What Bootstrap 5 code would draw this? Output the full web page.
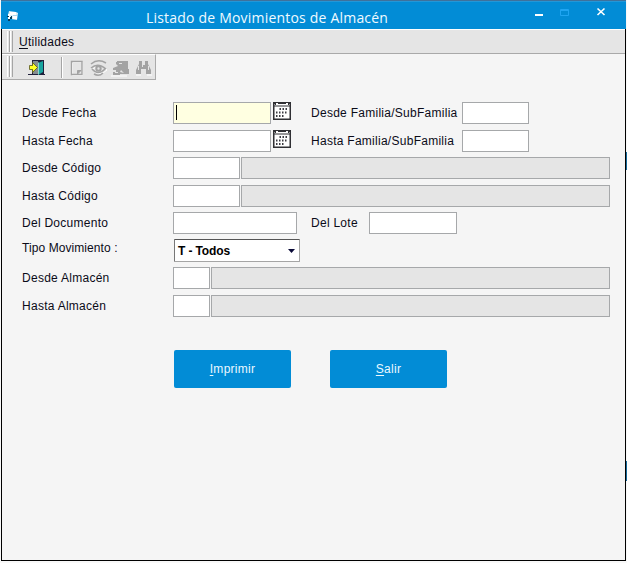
<!DOCTYPE html>
<html lang="es">
<head>
<meta charset="utf-8">
<title>Listado de Movimientos de Almacén</title>
<link href="https://cdn.jsdelivr.net/npm/bootstrap@5.3.0/dist/css/bootstrap.min.css" rel="stylesheet">
<style>
html, body { height: 563px; overflow: hidden; }
body {
  font: 12px/16px "Liberation Sans", Arial, sans-serif; letter-spacing: .27px; color: #0b0b18;
  background: linear-gradient(#14699b, #14699b) 626px 152px / 1px 18px no-repeat, linear-gradient(#14699b, #14699b) 626px 461px / 1px 20px no-repeat, #f8f8f8;
}
.win { width: 625px; height: 561px; margin-left: 1px; border: 1px solid #000; border-top: 0; background: #f5f5f5; }
.titlebar { height: 29px; margin: 0 -1px; padding-left: 6px; background: #028cd6; border-top: 1px solid #3f719b; box-shadow: inset 0 1px #2397d8; }
.caption-text { font: 14px/20px "Open Sans", sans-serif; letter-spacing: .2px; color: #f0faff; margin: 7px 0 0 127px; width: 243px; white-space: nowrap; }
.win-buttons { margin: 3px 0 0 138px; }
.menubar { height: 25px; background: #e5e5e5; border-top: 1px solid #fff; border-bottom: 1px solid #a9a9a9; }
.menubar u, .btn u { text-underline-offset: 2px; text-decoration-thickness: 1px; }
.menu-item { margin: 4px 0 0 6px; }
.toolbar { width: 154px; height: 26px; background: #e5e5e5; border: 1px solid #aaa; border-top-color: #fff; border-left: 0; }
.grip { width: 6px; height: 21px; margin: 1px 0 0 5px; border-right: 1px solid #a5a5a5; background: linear-gradient(90deg, #fff 1px, #e5e5e5 1px 2px, #a5a5a5 2px 3px, #fff 3px 4px, #e5e5e5 4px); }
.form-area { padding: 22px 15px 0 20px; }
.field-row { height: 22px; margin-bottom: 6px; }
.tight { margin-bottom: 5px; }
.lbl { width: 151px; white-space: nowrap; }
.lbl-kind { letter-spacing: .08px; margin-top: 1px; }
.lbl-b { width: 151px; margin-left: 20px; white-space: nowrap; }
.lbl-c { width: 58px; margin-left: 14px; white-space: nowrap; }
.form-control.box { height: 22px; min-height: 0; padding: 0 3px; border: 1px solid #a6a8aa; border-radius: 0; font: inherit; background: #fff; flex: none; }
.form-control.out { background: #e5e5e5; flex: 1 1 0; width: 0; margin-left: 1px; }
.form-control.active-box { background: #ffffe1; padding-left: 2px; }
.caret-bar { width: 1px; height: 15px; background: #000; margin-top: 2px; }
.w98 { width: 98px; } .w67 { width: 67px; } .w124 { width: 124px; } .w88 { width: 88px; } .w37 { width: 37px; }
.cal { margin: -4px 0 0 2px; }
.combo { width: 126px; height: 23px; margin-left: 1px; padding: 0 4px 0 3px; background: #fff; border: 1px solid #a5a5a5; border-top-color: #555; border-left-color: #777; border-radius: 1px; letter-spacing: -.12px; color: #000; }
.btn.cmd { width: 117px; height: 38px; padding: 0; border: 0; border-radius: 2px; background: #028cd6; color: #eaf8ff; font: inherit; letter-spacing: .27px; }
.actions { margin: 33px 0 0 152px; gap: 39px; }
svg { display: block; flex: none; }
</style>
<script src="https://cdn.jsdelivr.net/npm/bootstrap@5.3.0/dist/js/bootstrap.bundle.min.js"></script>
</head>
<body>
<svg width="0" height="0" class="position-absolute">
  <symbol id="calendar" viewBox="0 0 18 18">
    <path fill="#fff" d="M0 0h18v18H0z"/>
    <path fill="none" stroke="#303034" stroke-width="1.500" d="M.75 .75h16.500v16.500H.75z"/>
    <path fill="#303034" d="M0 0h18v2H0zM1 3.500h16v1H1zM2 2h1v1H2zM15 2h1v1h-1z"/>
    <path fill="#fff" d="M3 1h2v1H3zM13 1h2v1h-2z"/>
    <path stroke="#3c3c42" stroke-width="2" stroke-dasharray="1.500 1.500" d="M6.500 7H15M3 10.500h12M3 14h9" fill="none"/>
  </symbol>
</svg>
<main class="win">
  <header class="titlebar d-flex">
    <svg width="12" height="14" class="mt-2" viewBox="0 0 12 14">
      <path fill="#d9eef8" d="M2 2l7 1 2 1-1 7-6-1-3-4z"/><path fill="#fff" d="M3 3h6v3H3zM6 7h4v3H6zM1 5h2v3H1z"/>
      <path fill="#083d59" d="M0 7h2v1H0zM4 7h1v3H3v2H1v-2h2V8h1z"/><path fill="#fff" d="M1 8h2v2H1z"/><path fill="#a8d8ee" d="M6 6h4v1H6z"/>
    </svg>
    <div class="caption-text">Listado de Movimientos de Almacén</div>
    <svg class="win-buttons" width="90" height="18" viewBox="0 0 90 18">
      <path d="M8 10h8v2H8z" fill="#fff"/>
      <path d="M33.500 5.500h8v6h-8zM33 6.500h9" fill="none" stroke="#20a5f2"/>
      <path d="M70.500 4.500l7 6.500M77.500 4.500l-7 6.500" stroke="#fff" stroke-width="1.600" fill="none"/>
    </svg>
  </header>
  <nav class="menubar d-flex">
    <span class="grip"></span><span class="menu-item"><u>U</u>tilidades</span>
  </nav>
  <div class="toolbar d-flex">
    <span class="grip"></span>
    <svg width="139" height="24" viewBox="13 54 139 24">
      <path fill="#20203c" d="M32 59h12v14h1v1H28v-1h4z"/><path fill="#858d90" d="M33 60h5v13h-5z"/>
      <path fill="#19a5a0" d="M38 62l5-2v11l-5 3z"/><path fill="#8cd8cd" d="M38 62l1-1v12l-1 1z"/>
      <path d="M29.500 64.500h3v-3l5 5-5 5v-3h-3z" fill="#ffff25" stroke="#55551c" stroke-width=".8"/>
      <path d="M61.500 56v21" stroke="#a5a5a5"/><path d="M62.500 56v21" stroke="#fff"/>
      <g transform="translate(1 1)" stroke="#fff" fill="none"><path d="M71.500 60.500h10v13h-10z"/><path d="M91 68q7-8 15 0-7 7-15 0M110 74h16M135 73h5M146 73h5"/></g>
      <g fill="none" stroke="#a3a3a3">
        <path stroke-width="1.400" d="M71.500 60.500h10.500v13H71.500z"/><path fill="#a3a3a3" d="M77.500 73v-3.500H81z"/>
        <path d="M91 63q7-6 15-1M91 67q7-6 15 1M92 68q6 7 13 0M94 73q5 3 9-1" stroke-width="1.500"/><circle cx="98.500" cy="67.500" r="2.200" stroke-width="2"/>
      </g>
      <g fill="#a3a3a3">
        <path d="M117 60h11v8h1v5h-9v1h-7v-3h3v-2h-3v-2l5-2-2-2v-2h1z"/>
        <path d="M139 60h3v4h3v-4h3v3l3 6v4h-5v-5h-5v5h-5v-4l3-6z"/>
      </g>
      <path d="M119 62h3v1h-3zM121 69l3 3-4-1zM115 71h3v1h-3z" fill="#e5e5e5"/>
      <path d="M138.500 65v4M142.500 63v3M148.500 65v4" stroke="#e5e5e5"/>
    </svg>
  </div>
  <form class="form-area">
    <div class="field-row d-flex align-items-center">
      <label class="lbl">Desde Fecha</label><div class="form-control box active-box w98"><div class="caret-bar"></div></div>
      <svg class="cal" width="18" height="18"><use href="#calendar"/></svg>
      <label class="lbl-b">Desde Familia/SubFamilia</label><div class="form-control box w67"></div>
    </div>
    <div class="field-row tight d-flex align-items-center">
      <label class="lbl">Hasta Fecha</label><div class="form-control box w98"></div>
      <svg class="cal" width="18" height="18"><use href="#calendar"/></svg>
      <label class="lbl-b">Hasta Familia/SubFamilia</label><div class="form-control box w67"></div>
    </div>
    <div class="field-row d-flex align-items-center">
      <label class="lbl">Desde Código</label><div class="form-control box w67"></div><div class="form-control box out"></div>
    </div>
    <div class="field-row tight d-flex align-items-center">
      <label class="lbl">Hasta Código</label><div class="form-control box w67"></div><div class="form-control box out"></div>
    </div>
    <div class="field-row tight d-flex align-items-center">
      <label class="lbl">Del Documento</label><div class="form-control box w124"></div>
      <label class="lbl-c">Del Lote</label><div class="form-control box w88"></div>
    </div>
    <div class="field-row d-flex align-items-start">
      <label class="lbl lbl-kind">Tipo Movimiento :</label>
      <div class="combo d-flex align-items-center justify-content-between fw-bold"><span>T - Todos</span>
        <svg width="7" height="4" viewBox="0 0 7 4"><path d="M0 0h7L3.500 4z" fill="#0a0a38"/></svg></div>
    </div>
    <div class="field-row d-flex align-items-center">
      <label class="lbl">Desde Almacén</label><div class="form-control box w37"></div><div class="form-control box out"></div>
    </div>
    <div class="field-row mb-0 d-flex align-items-center">
      <label class="lbl">Hasta Almacén</label><div class="form-control box w37"></div><div class="form-control box out"></div>
    </div>
    <div class="actions d-flex">
      <button type="button" class="btn cmd"><u>I</u>mprimir</button>
      <button type="button" class="btn cmd"><u>S</u>alir</button>
    </div>
  </form>
</main>
</body>
</html>
